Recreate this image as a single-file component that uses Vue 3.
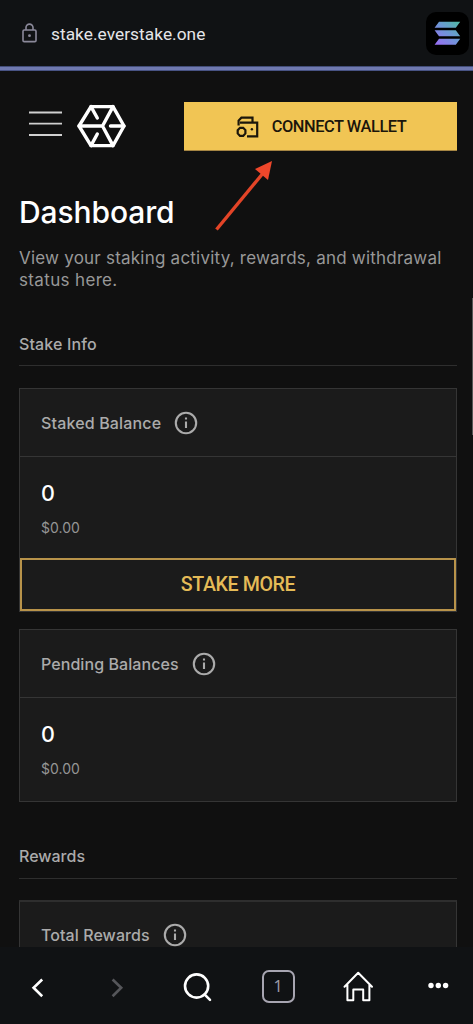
<script setup>
const cards = {
  staked: { title: 'Staked Balance', amount: '0', fiat: '$0.00' },
  pending: { title: 'Pending Balances', amount: '0', fiat: '$0.00' },
}
</script>

<template>
  <div class="screen">
    <header class="urlbar">
      <svg class="lock" width="16" height="20" viewBox="0 0 16 20">
        <rect x="1" y="7" width="13" height="11.6" rx="1.2" />
        <path d="M4 7V4.6a3.5 3.5 0 0 1 7 0V7" />
        <circle cx="7.5" cy="12.7" r="1.4" />
      </svg>
      <span class="url">stake.everstake.one</span>
      <span class="token">
        <svg width="27" height="25" viewBox="0 0 27 25">
          <defs>
            <linearGradient id="sol" x1="3" y1="25" x2="25" y2="0" gradientUnits="userSpaceOnUse">
              <stop offset="0" stop-color="#9a6cf5" />
              <stop offset="0.5" stop-color="#6f95d8" />
              <stop offset="1" stop-color="#4fbba4" />
            </linearGradient>
          </defs>
          <path fill="url(#sol)" d="M5 0.7h21.2l-4.4 6.1H0.6zM0.6 9.2h21.2l4.4 6.1H5zM5 17.7h21.2l-4.4 6.1H0.6z" />
        </svg>
      </span>
    </header>
    <div class="progress"></div>

    <main class="page">
      <div class="topbar">
        <svg class="burger" width="33" height="30" viewBox="0 0 33 30"><path d="M0 3.5H33M0 14.7H33M0 26H33" /></svg>
        <svg class="logo" width="50" height="44" viewBox="0 0 50 44">
          <path d="M14 2.6H36L47 22L36 41.6H14L2 22Z" />
          <path d="M2 22H25.5M36 2.6L25.5 22L36 41.6M14 2.6L20.3 14M14 41.6L20.3 30M33.5 22H47" />
        </svg>
        <button class="connect">
          <svg width="23" height="23" viewBox="0 0 23 23">
            <path d="M2.6 9.5V4.6L5.4 1.7H16.5V6.6M4 6.7H21.2V20.4H11" />
            <path d="M4 11.8h3.2l2.2 2.3v3.3l-2.2 2.5H4l-2.3-2.5v-3.3z" />
            <circle cx="15.9" cy="13.2" r="1.2" />
          </svg>
          <span>CONNECT WALLET</span>
        </button>
      </div>

      <h1>Dashboard</h1>
      <p class="lead"><span>View your staking activity, rewards, and withdrawal</span><br><span class="last">status here.</span></p>

      <h2><span>Stake Info</span></h2>
      <section class="card">
        <div class="card-head">
          <span>{{ cards.staked.title }}</span>
          <svg class="info" width="24" height="24" viewBox="0 0 24 24"><circle cx="12" cy="12" r="10.2" /><path d="M12 10.4V17M12 6.5V8.5" /></svg>
        </div>
        <div class="card-body">
          <div class="amount">{{ cards.staked.amount }}</div>
          <div class="fiat">{{ cards.staked.fiat }}</div>
        </div>
        <button class="more"><span>STAKE MORE</span></button>
      </section>

      <section class="card second">
        <div class="card-head pending">
          <span>{{ cards.pending.title }}</span>
          <svg class="info" width="24" height="24" viewBox="0 0 24 24"><circle cx="12" cy="12" r="10.2" /><path d="M12 10.4V17M12 6.5V8.5" /></svg>
        </div>
        <div class="card-body">
          <div class="amount">{{ cards.pending.amount }}</div>
          <div class="fiat">{{ cards.pending.fiat }}</div>
        </div>
      </section>

      <h2 class="rewards"><span>Rewards</span></h2>
      <section class="card total">
        <div class="card-head">
          <span>Total Rewards</span>
          <svg class="info" width="24" height="24" viewBox="0 0 24 24"><circle cx="12" cy="12" r="10.2" /><path d="M12 10.4V17M12 6.5V8.5" /></svg>
        </div>
      </section>
    </main>

    <nav class="tabs">
      <svg width="79" height="40" viewBox="0 0 79 40"><path class="w" d="M42.2 12.5L33.6 20.8L42.2 29.2" /></svg>
      <svg width="79" height="40" viewBox="0 0 79 40"><path class="dim" d="M33.6 12.5L42.2 20.8L33.6 29.2" /></svg>
      <svg width="80" height="40" viewBox="0 0 80 40"><circle class="w" cx="38.6" cy="19" r="11.6" /><path class="w" d="M46.5 27.3L52 32.8" /></svg>
      <div class="count"><span>1</span></div>
      <svg width="80" height="40" viewBox="0 0 80 40"><path class="thin" d="M26.5 19.8L40.2 5.8L54 19.8M29.4 17.5V33.2H35.3V22.5H45.2V33.2H51.4V17.5" /></svg>
      <svg width="75" height="40" viewBox="0 0 75 40"><g fill="#fff"><circle cx="33" cy="18.5" r="2.7" /><circle cx="40.3" cy="18.5" r="2.7" /><circle cx="47.6" cy="18.5" r="2.7" /></g></svg>
    </nav>

    <svg class="arrow" width="62" height="74" viewBox="0 0 62 74">
      <path d="M2.5 71.5L50 14" stroke="#e34427" stroke-width="3.4" />
      <path d="M58 3L54 22L41 11Z" fill="#ee472b" />
    </svg>
    <div class="scroll"></div>
  </div>
</template>

<style>
body { background: #101010; overflow: hidden; }
</style>

<style scoped>
* { box-sizing: border-box; }
.screen { position: relative; width: 473px; height: 1024px; overflow: hidden; display: flex; flex-direction: column; background: #101010; font-family: Inter, "Liberation Sans", sans-serif; color: #ababab; }
svg { display: block; flex: none; }
.urlbar { height: 66px; flex: none; display: flex; align-items: center; padding: 0 4px 0 22px; background: #101214; }
.lock { fill: none; stroke: #8b899a; stroke-width: 1.6; }
.lock circle { fill: #8b899a; stroke: none; }
.url { margin-left: 13px; font: 17.3px/24px Roboto, sans-serif; letter-spacing: .05px; color: #e5e5e8; margin-top: 1px; white-space: nowrap; }
.token { margin-left: auto; width: 43px; height: 43px; background: #000; border-radius: 10px; display: grid; place-items: center; }
.progress { height: 5px; flex: none; background: #6f79b0; border-top: 1px solid #424d78; border-bottom: 1px solid #485384; }
.page { flex: 1; min-height: 0; overflow: hidden; padding: 31px 16px 0 19px; }
.topbar { display: flex; align-items: flex-start; height: 49px; }
.burger { margin: 7px 15px 0 10px; fill: none; stroke: #d0d0d0; stroke-width: 1.8; }
.logo { margin-top: 2px; fill: none; stroke: #fff; stroke-width: 3.4; stroke-linejoin: round; stroke-linecap: round; }
.connect { margin-left: auto; width: 273px; height: 49px; border: 0; border-bottom: 1px solid #a58543; padding: 2px 0 0 1px; background: #f1c554; display: flex; align-items: center; justify-content: center; gap: 13px; color: #1b160b; font: 500 16.4px/20px Roboto, sans-serif; letter-spacing: -.43px; white-space: nowrap; }
.connect svg { fill: none; stroke: #1b160b; stroke-width: 2.2; }
.connect circle { fill: #1b160b; stroke: none; }
h1 { margin: 41px 0 0; font-size: 30px; line-height: 40px; font-weight: 500; color: #fff; letter-spacing: -.1px; white-space: nowrap; }
.lead { margin: 16px 0 0; font-size: 17px; line-height: 21.5px; letter-spacing: .22px; color: #989898; white-space: nowrap; }
.lead .last { letter-spacing: .35px; }
h2 { margin: 43px 0 22px; height: 32px; border-bottom: 1px solid #2e2e2e; font-size: 16px; line-height: 20px; font-weight: 500; letter-spacing: .13px; color: #ababab; white-space: nowrap; }
h2.rewards { margin: 44px 0 21px; height: 33px; letter-spacing: 0; }
.card { background: #1b1b1b; border: 1px solid #353535; }
.card.total { border-top: 2px solid #2e2e2e; }
.card-head { height: 68px; display: flex; align-items: center; gap: 13px; padding-left: 21px; border-bottom: 1px solid #353535; font-size: 16px; font-weight: 500; letter-spacing: .16px; white-space: nowrap; }
.card-head.pending { letter-spacing: .07px; }
.total .card-head { height: 67px; letter-spacing: .07px; }
.info { fill: none; stroke: #ababab; stroke-width: 2.1; }
.card-body { height: 101px; padding: 23px 0 0 21px; }
.amount { font-size: 21.5px; line-height: 26px; color: #fff; font-weight: 500; }
.fiat { margin-top: 13px; font-size: 14px; line-height: 18px; color: #959595; }
.more { display: block; width: 100%; height: 53px; border: 2px solid #b8934a; background: #1b1b1b; color: #e5bb57; font: 500 19.6px/24px Roboto, sans-serif; letter-spacing: -.4px; padding: 1px 0 0; white-space: nowrap; }
.second { margin-top: 17px; height: 173px; }
.tabs { height: 77px; flex: none; background: #101214; display: flex; align-items: flex-start; padding-top: 20px; }
.tabs path, .tabs .w { fill: none; stroke: #fff; stroke-width: 2.6; stroke-linecap: round; }
.tabs svg:first-child path, .tabs path.dim { stroke-linecap: butt; }
.tabs path.dim { stroke: #55565a; }
.tabs path.thin { stroke-width: 2; stroke-linejoin: round; }
.count { width: 80px; height: 40px; display: flex; align-items: center; justify-content: center; }
.count span { width: 33px; height: 33px; margin-top: -1px; border: 2px solid #a7a5b1; border-radius: 7px; color: #9a99a4; font: 16px/29px "Noto Sans", sans-serif; text-align: center; }
.arrow { position: absolute; left: 214px; top: 158px; }
.scroll { position: absolute; right: 0; top: 298px; width: 1px; height: 137px; background: #555; }
</style>
